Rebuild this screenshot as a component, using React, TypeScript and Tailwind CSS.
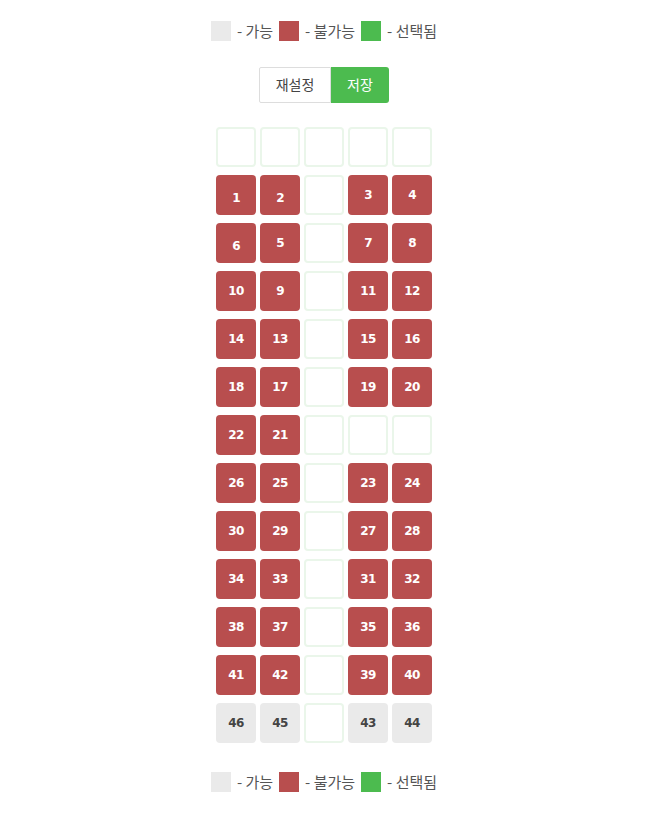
import React from "react";

type Seat = { label?: string; status: "empty" | "taken" | "free" };

const e: Seat = { status: "empty" };
const t = (label: string): Seat => ({ label, status: "taken" });
const f = (label: string): Seat => ({ label, status: "free" });

const rows: Seat[][] = [
  [e, e, e, e, e],
  [t("1"), t("2"), e, t("3"), t("4")],
  [t("6"), t("5"), e, t("7"), t("8")],
  [t("10"), t("9"), e, t("11"), t("12")],
  [t("14"), t("13"), e, t("15"), t("16")],
  [t("18"), t("17"), e, t("19"), t("20")],
  [t("22"), t("21"), e, e, e],
  [t("26"), t("25"), e, t("23"), t("24")],
  [t("30"), t("29"), e, t("27"), t("28")],
  [t("34"), t("33"), e, t("31"), t("32")],
  [t("38"), t("37"), e, t("35"), t("36")],
  [t("41"), t("42"), e, t("39"), t("40")],
  [f("46"), f("45"), e, f("43"), f("44")],
];

const Legend = () => (
  <div className="flex items-center justify-center text-[15px] text-[#555]">
    <span className="w-5 h-5 bg-[#eaeaea]" />
    <span className="mx-[6px]">- 가능</span>
    <span className="w-5 h-5 bg-[#b84e4e]" />
    <span className="mx-[6px]">- 불가능</span>
    <span className="w-5 h-5 bg-[#4cbb4f]" />
    <span className="ml-[6px]">- 선택됨</span>
  </div>
);

const SeatBox = ({ seat }: { seat: Seat }) => {
  if (seat.status === "empty") {
    return <div className="w-10 h-10 rounded-[4px] border-2 border-[#eaf6ea] bg-white" />;
  }
  // a few labels sit a little lower in the original
  const low = seat.label === "1" || seat.label === "2" || seat.label === "6";
  return (
    <div
      className={
        seat.status === "taken"
          ? "w-10 h-10 rounded-[4px] bg-[#b84e4e] text-white flex items-center justify-center text-[12px] tracking-[-0.6px] font-bold font-['DejaVu_Sans']"
          : "w-10 h-10 rounded-[4px] bg-[#eaeaea] text-[#444] flex items-center justify-center text-[12px] tracking-[-0.6px] font-bold font-['DejaVu_Sans']"
      }
    >
      <span className={low ? "pt-[6px]" : ""}>{seat.label}</span>
    </div>
  );
};

export default function App() {
  return (
    <div
      className="w-[648px] min-h-[814px] bg-white pt-[20px]"
      style={{ fontFamily: '"Noto Sans CJK KR", "DejaVu Sans", sans-serif' }}
    >
      <Legend />
      <div className="flex justify-center mt-[24px]">
        <button className="h-9 w-[72px] border border-[#ddd] bg-white text-[14px] text-[#444] rounded-l-[2px]">
          재설정
        </button>
        <button className="h-9 w-[58px] bg-[#4cbb4f] text-white text-[14px] rounded-r-[3px]">
          저장
        </button>
      </div>
      <div className="flex flex-col items-center gap-2 mt-6">
        {rows.map((row, i) => (
          <div key={i} className="flex gap-1">
            {row.map((s, j) => (
              <SeatBox key={j} seat={s} />
            ))}
          </div>
        ))}
      </div>
      <div className="mt-[28px]">
        <Legend />
      </div>
    </div>
  );
}
